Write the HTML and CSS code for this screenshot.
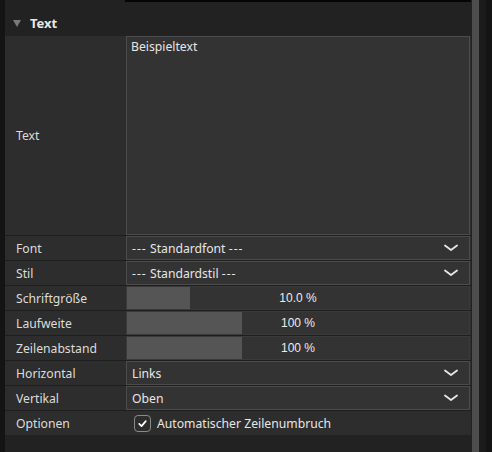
FILE: index.html
```html
<!DOCTYPE html>
<html lang="de">
<head>
<meta charset="utf-8">
<link rel="stylesheet" href="styles.css">
</head>
<body>
<div class="app">
  <div class="edge"></div>
  <div class="panel">
    <div class="topline"><div class="topline-gap"></div><div class="topline-bar"></div></div>
    <div class="section-head">
      <span class="tri"></span>
      <span class="section-title">Text</span>
    </div>
    <div class="props">
      <div class="row row-text">
        <div class="label">Text</div>
        <div class="value box textarea">Beispieltext</div>
      </div>
      <div class="row">
        <div class="label">Font</div>
        <div class="value box select"><span><span class="dash">---</span> Standardfont <span class="dash">---</span></span><svg class="chev" viewBox="0 0 14 8"><path d="M1 1.5 L7 6 L13 1.5" fill="none" stroke="#e6e6e6" stroke-width="1.8" stroke-linecap="round" stroke-linejoin="round"/></svg></div>
      </div>
      <div class="row">
        <div class="label">Stil</div>
        <div class="value box select"><span><span class="dash">---</span> Standardstil <span class="dash">---</span></span><svg class="chev" viewBox="0 0 14 8"><path d="M1 1.5 L7 6 L13 1.5" fill="none" stroke="#e6e6e6" stroke-width="1.8" stroke-linecap="round" stroke-linejoin="round"/></svg></div>
      </div>
      <div class="row">
        <div class="label">Schriftgröße</div>
        <div class="value slider"><div class="fill" style="width:63px"></div><span class="num">10.0 %</span></div>
      </div>
      <div class="row">
        <div class="label">Laufweite</div>
        <div class="value slider"><div class="fill" style="width:115px"></div><span class="num">100 %</span></div>
      </div>
      <div class="row">
        <div class="label">Zeilenabstand</div>
        <div class="value slider"><div class="fill" style="width:115px"></div><span class="num">100 %</span></div>
      </div>
      <div class="row">
        <div class="label">Horizontal</div>
        <div class="value box select"><span>Links</span><svg class="chev" viewBox="0 0 14 8"><path d="M1 1.5 L7 6 L13 1.5" fill="none" stroke="#e6e6e6" stroke-width="1.8" stroke-linecap="round" stroke-linejoin="round"/></svg></div>
      </div>
      <div class="row">
        <div class="label">Vertikal</div>
        <div class="value box select"><span>Oben</span><svg class="chev" viewBox="0 0 14 8"><path d="M1 1.5 L7 6 L13 1.5" fill="none" stroke="#e6e6e6" stroke-width="1.8" stroke-linecap="round" stroke-linejoin="round"/></svg></div>
      </div>
      <div class="row">
        <div class="label">Optionen</div>
        <div class="value check">
          <span class="cb"><svg viewBox="0 0 16 16"><path d="M4.5 8.3 L7 10.8 L11.5 5.5" fill="none" stroke="#ffffff" stroke-width="1.8" stroke-linecap="round" stroke-linejoin="round"/></svg></span>
          <span>Automatischer Zeilenumbruch</span>
        </div>
      </div>
    </div>
  </div>
  <div class="scroll">
    <div class="scroll-thumb"></div>
    <div class="scroll-track"></div>
    <div class="scroll-outer"></div>
  </div>
</div>
</body>
</html>
```
FILE: styles.css
```css
* { box-sizing: border-box; }
html, body { margin: 0; padding: 0; }
body {
  width: 492px;
  height: 452px;
  overflow: hidden;
  background: #222222;
  font-family: "Noto Sans", "DejaVu Sans", sans-serif;
  font-size: 12.2px;
  color: #e4e4e4;
}
.app {
  display: flex;
  height: 452px;
}
.edge {
  width: 5px;
  background: #141414;
}
.panel {
  width: 466px;
  display: flex;
  flex-direction: column;
  background: #222222;
}
.topline {
  display: flex;
  height: 2px;
}
.topline-gap { width: 120px; }
.topline-bar { flex: 1; background: #050505; }
.section-head {
  height: 34px;
  display: flex;
  align-items: center;
  padding: 8px 0 0 8px;
  gap: 9px;
}
.tri {
  width: 0;
  height: 0;
  border-left: 4px solid transparent;
  border-right: 4px solid transparent;
  border-top: 7px solid #7a7a7a;
}
.section-title {
  font-weight: bold;
  font-size: 13px;
  color: #e8e8e8;
}
.props {
  display: flex;
  flex-direction: column;
  gap: 1px;
  background: #1e1e1e;
}
.row {
  display: grid;
  grid-template-columns: 121px 1fr;
  height: 24px;
  background: #2d2d2d;
}
.row-text { height: 199px; }
.label {
  display: flex;
  align-items: center;
  padding-left: 11px;
  color: #dcdcdc;
}
.value {
  position: relative;
  display: flex;
  align-items: center;
  background: #333333;
  margin-right: 1px;
  color: #e6e6e6;
}
.box {
  border: 1px solid #4c4c4c;
}
.textarea {
  align-items: flex-start;
  padding: 1px 0 0 4px;
}
.select {
  justify-content: space-between;
  padding: 0 11px 0 5px;
}
.dash { letter-spacing: 1px; }
.chev { width: 14px; height: 8px; }
.slider {
  justify-content: center;
  border: 1px solid #3a3a3a;
}
.slider .fill {
  position: absolute;
  left: 0;
  top: 0;
  bottom: 0;
  background: #555555;
}
.num {
  position: relative;
  font-family: "Liberation Sans", Arial, sans-serif;
  font-size: 12px;
  color: #ececec;
}
.check {
  gap: 6px;
  padding-left: 8px;
  background: #2d2d2d;
}
.cb {
  width: 17px;
  height: 17px;
  border: 1px solid #8a8a8a;
  border-radius: 4px;
  display: flex;
}
.cb svg { width: 15px; height: 15px; }
.scroll {
  display: flex;
  flex: 1;
}
.scroll-thumb { width: 7px; margin-left: 1px; background: #4d4d4d; }
.scroll-track { width: 7px; background: #1b1b1b; }
.scroll-outer { flex: 1; background: #141414; }
```
